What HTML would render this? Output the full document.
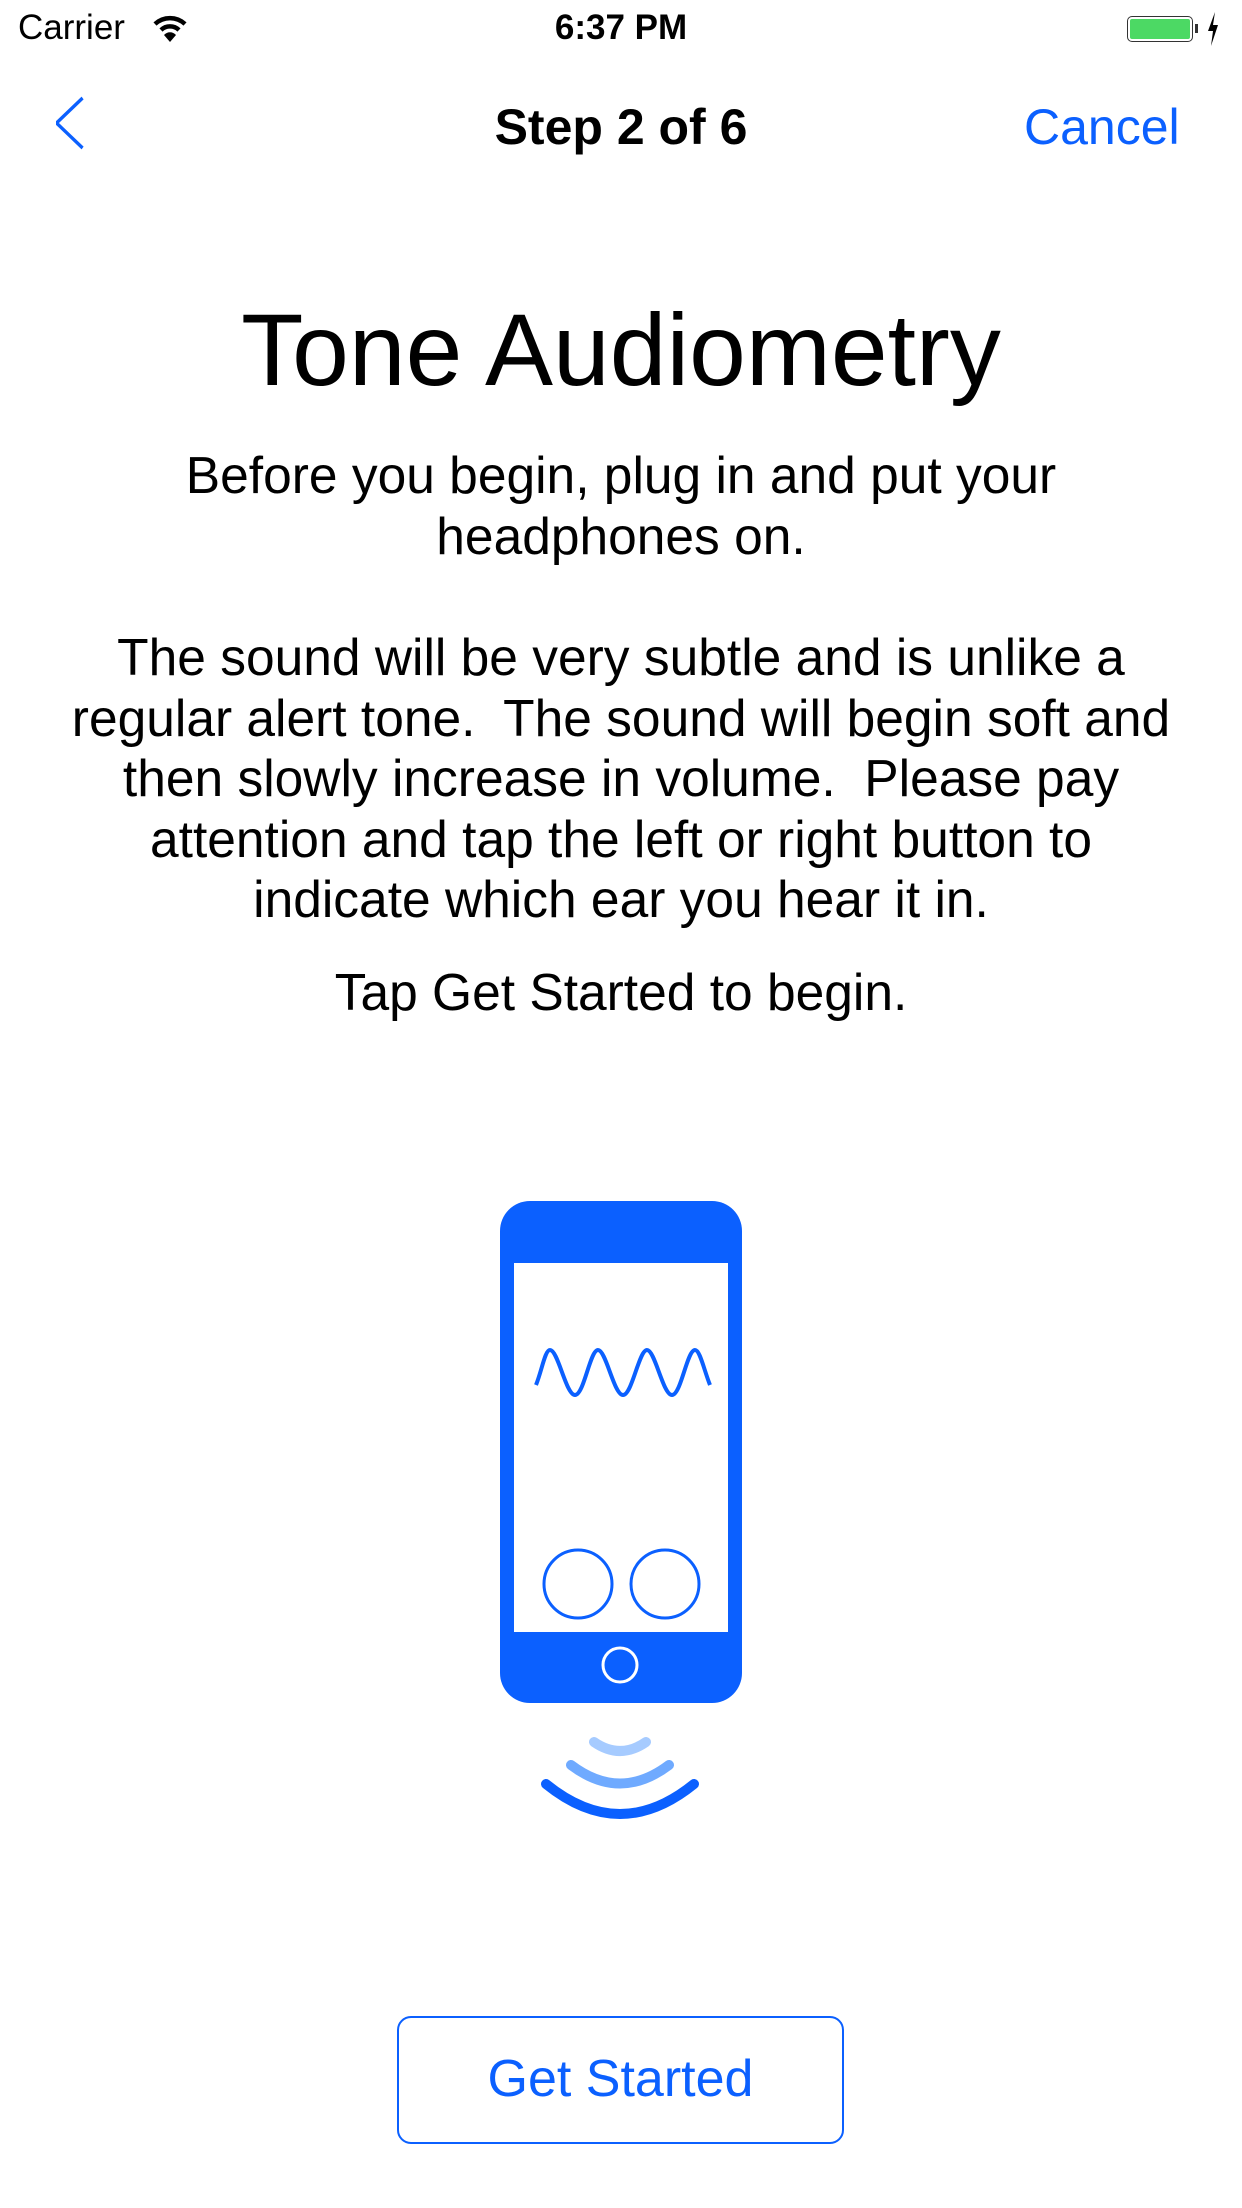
<!DOCTYPE html>
<html><head><meta charset="utf-8"><style>
body{margin:0;width:1242px;height:2208px;background:#fff;position:relative;overflow:hidden;font-family:"Liberation Sans",sans-serif;color:#000}
.a{position:absolute;white-space:nowrap}
.c{left:0;width:1242px;text-align:center}
.p{font-size:51.5px;line-height:60.5px}
</style></head><body>
<div class="a" style="left:18px;top:8px;font-size:35px">Carrier</div>
<svg class="a" style="left:152px;top:14px" width="36" height="30" viewBox="0 0 36 30"><path d="M3 10 A22 22 0 0 1 33 10" stroke="#000" stroke-width="4.5" fill="none"/><path d="M9 16 A13 13 0 0 1 27 16" stroke="#000" stroke-width="4.5" fill="none"/><path d="M12 21 L18 28 L24 21 A8 8 0 0 0 12 21Z" fill="#000"/></svg>
<div class="a c" style="top:8px;font-size:35px;font-weight:bold">6:37 PM</div>
<div class="a" style="left:1127px;top:16px;width:66px;height:26px;border:1.5px solid #333;border-radius:5px;box-sizing:border-box;padding:2px"><div style="background:#4cd964;width:100%;height:100%;border-radius:2px"></div></div>
<div class="a" style="left:1195px;top:24px;width:3px;height:9px;background:#333"></div>
<svg class="a" style="left:1206px;top:12px" width="14" height="34" viewBox="0 0 14 34"><path d="M9 0 L2 19 H7 L5 34 L12 13 H7Z" fill="#000"/></svg>
<svg class="a" style="left:56px;top:96px" width="40" height="56"><path d="M34 2 L5 27 L34 52" stroke="#0b60ff" stroke-width="3.5" fill="none" transform="translate(-4,0) scale(0.9,1)"/></svg>
<div class="a c" style="top:98px;font-size:50px;font-weight:bold">Step 2 of 6</div>
<div class="a" style="left:1024px;top:98px;font-size:50px;color:#0b60ff">Cancel</div>
<div class="a c" style="top:290px;font-size:102px;line-height:120px">Tone Audiometry</div>
<div class="a c p" style="top:445px">Before you begin, plug in and put your<br>headphones on.</div>
<div class="a c p" style="top:627px">The sound will be very subtle and is unlike a<br>regular alert tone.&nbsp; The sound will begin soft and<br>then slowly increase in volume.&nbsp; Please pay<br>attention and tap the left or right button to<br>indicate which ear you hear it in.</div>
<div class="a c p" style="top:962px">Tap Get Started to begin.</div>
<svg class="a" style="left:0;top:1190px" width="1242" height="650">
<rect x="500" y="11" width="242" height="502" rx="30" fill="#0b60ff"/>
<rect x="514" y="73" width="214" height="369" fill="#fff"/>
<path d="M536 195 C542 180 545 160 550 160 C558 160 566 205 575 205 C584 205 590 160 598 160 C606 160 614 205 623 205 C632 205 639 160 647 160 C655 160 663 205 672 205 C681 205 687 160 695 160 C700 160 704 180 710 195" stroke="#0b60ff" stroke-width="4" fill="none"/>
<circle cx="578" cy="394" r="34" stroke="#0b60ff" stroke-width="3" fill="none"/>
<circle cx="665" cy="394" r="34" stroke="#0b60ff" stroke-width="3" fill="none"/>
<circle cx="620" cy="475" r="17" stroke="#fff" stroke-width="3" fill="none"/>
<path d="M594 552 Q620 570 646 552" stroke="#a6cbff" stroke-width="10" stroke-linecap="round" fill="none"/>
<path d="M571 575 Q620 612 669 575" stroke="#6faaff" stroke-width="10" stroke-linecap="round" fill="none"/>
<path d="M546 594 Q620 654 694 594" stroke="#0b60ff" stroke-width="10" stroke-linecap="round" fill="none"/>
</svg>
<div class="a" style="left:397px;top:2016px;width:447px;height:128px;border:2.5px solid #0b60ff;border-radius:14px;box-sizing:border-box;text-align:center;line-height:123px;font-size:52px;color:#0b60ff">Get Started</div>
</body></html>
